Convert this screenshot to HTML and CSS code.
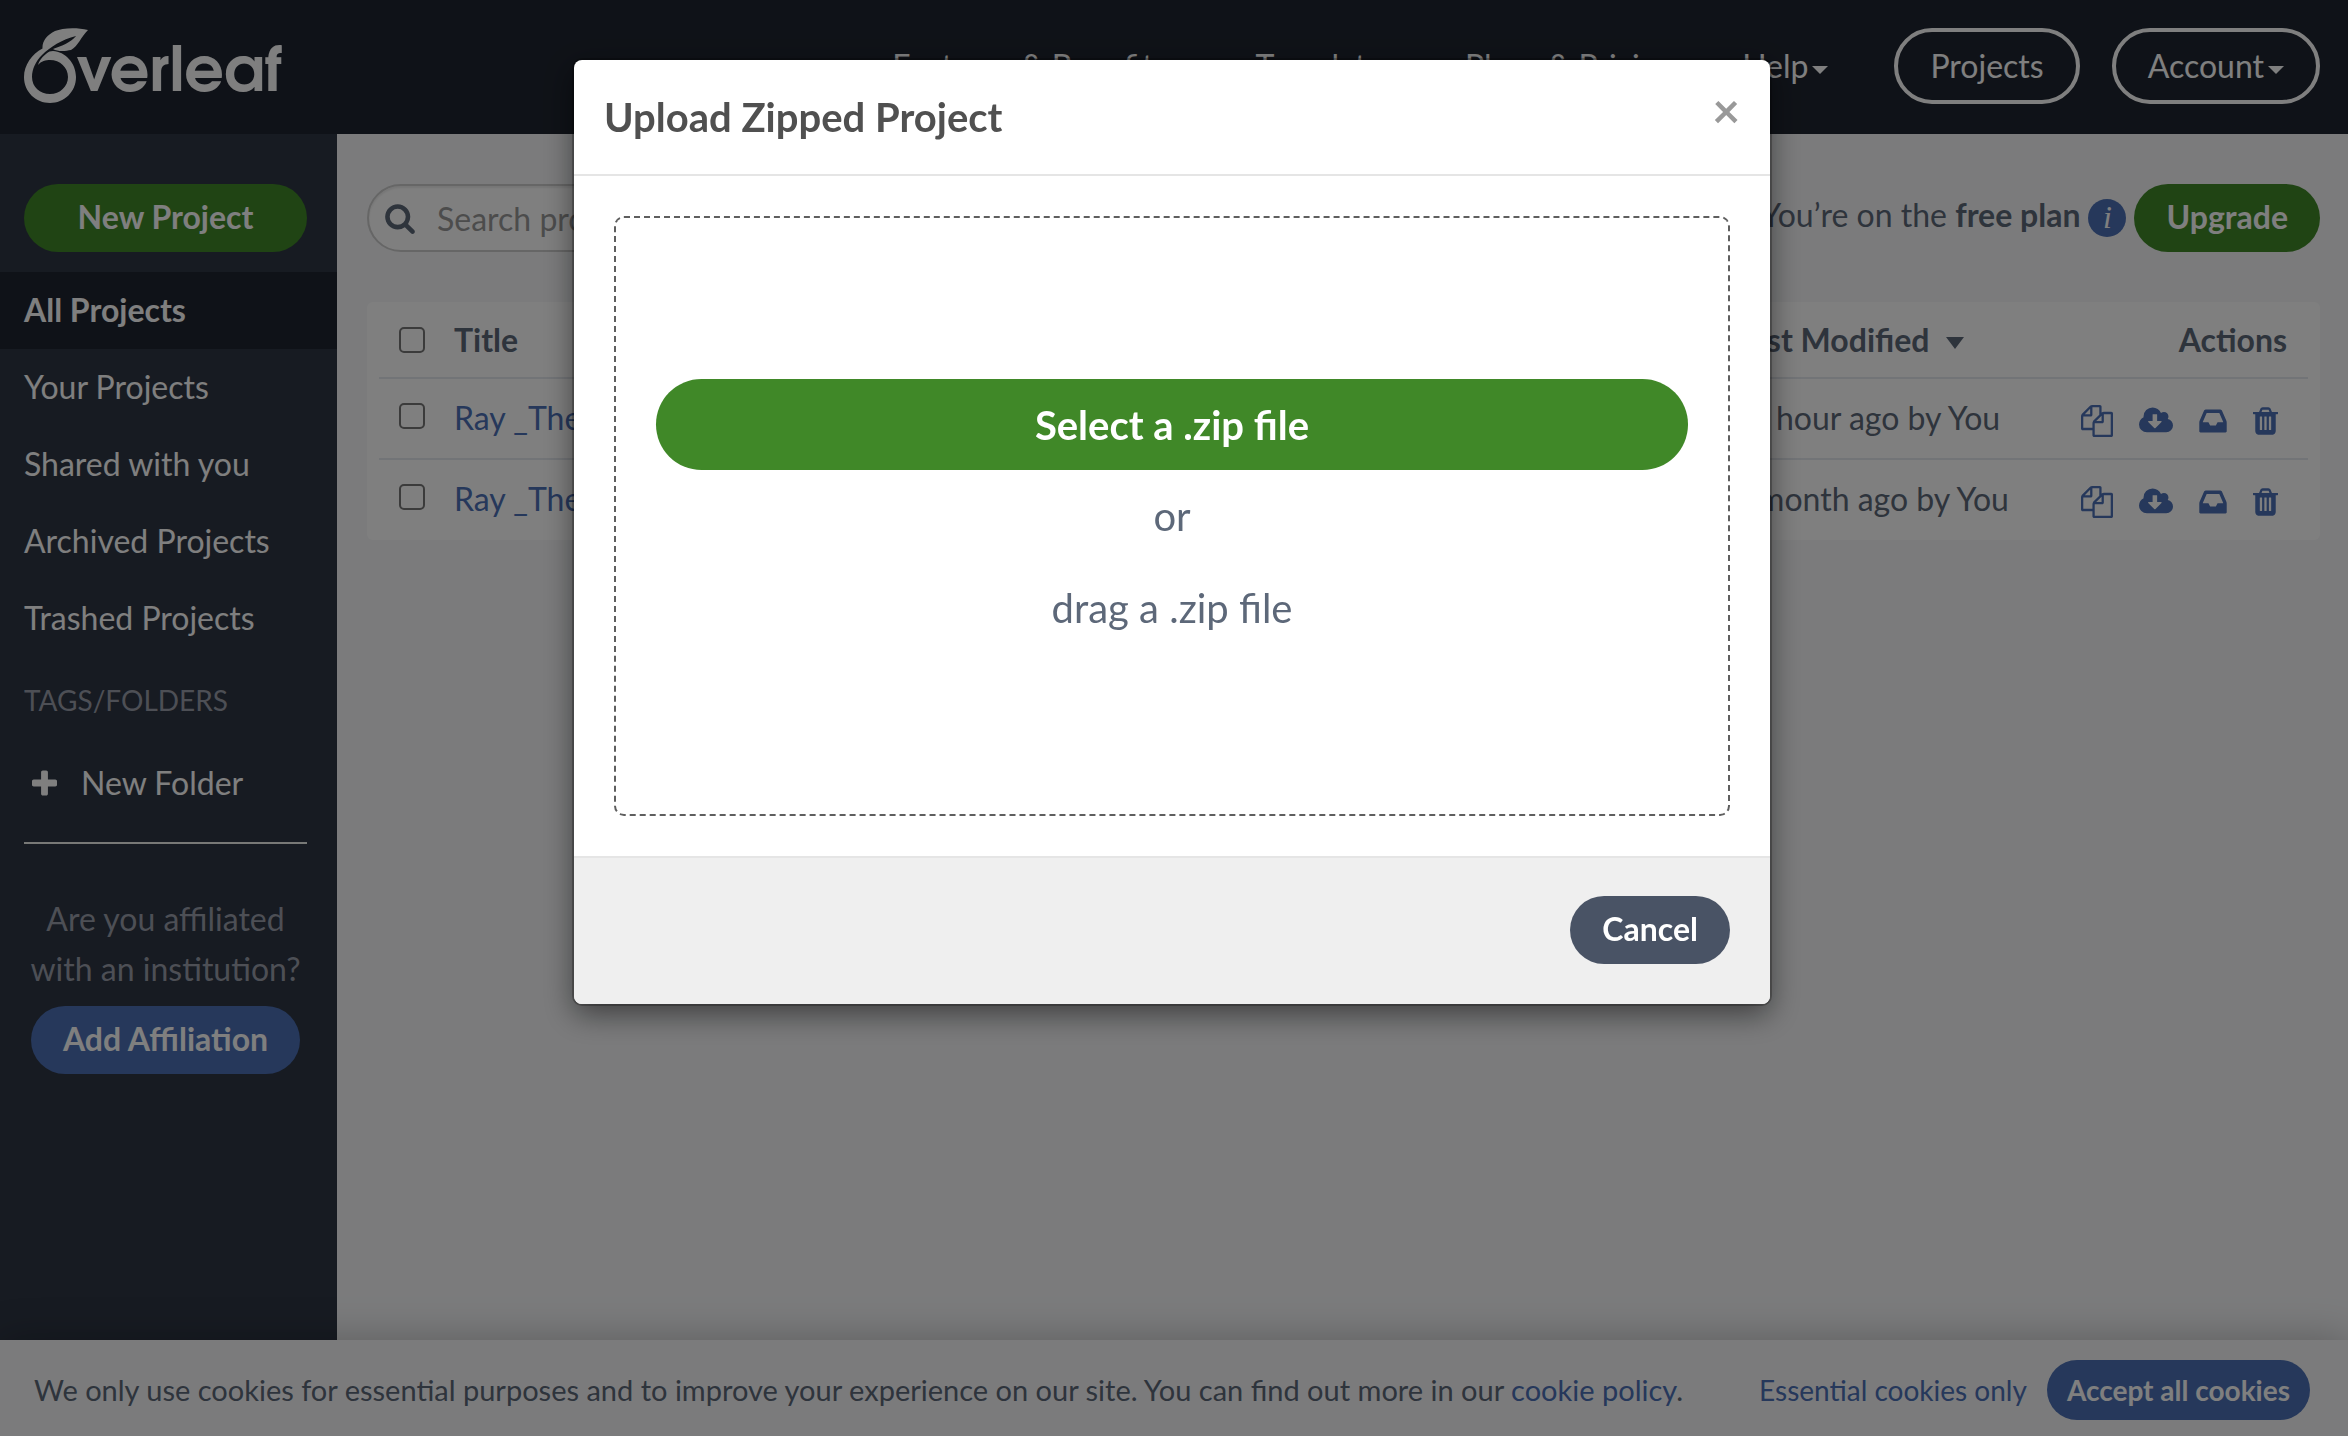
FILE: index.html
```html
<!DOCTYPE html>
<html lang="en">
<head>
<meta charset="utf-8">
<title>Your Projects - Overleaf</title>
<link rel="stylesheet" href="styles.css">
</head>
<body>
<svg class="sprite" aria-hidden="true">
  <symbol id="copy" viewBox="0 0 1792 1792"><path d="M1696 384q40 0 68 28t28 68v1216q0 40-28 68t-68 28h-960q-40 0-68-28t-28-68v-288h-544q-40 0-68-28t-28-68v-672q0-40 20-88t48-76l408-408q28-28 76-48t88-20h416q40 0 68 28t28 68v328q68-40 128-40h416zm-544 213l-299 299h299v-299zm-640-384l-299 299h299v-299zm196 647l316-316v-416h-384v416q0 40-28 68t-68 28h-416v640h512v-256q0-40 20-88t48-76zm956 804v-1152h-384v416q0 40-28 68t-68 28h-416v640h896z"/></symbol>
  <symbol id="download" viewBox="0 0 1920 1792"><path d="M1280 928q0-14-9-23t-23-9h-224v-352q0-13-9.500-22.500t-22.500-9.500h-192q-13 0-22.500 9.500t-9.500 22.500v352h-224q-13 0-22.500 9.500t-9.500 22.500q0 14 9 23l352 352q9 9 23 9t23-9l351-351q10-12 10-24zm640 224q0 159-112.500 271.500t-271.500 112.500h-1088q-185 0-316.500-131.500t-131.500-316.500q0-130 70-240t188-165q-2-30-2-43 0-212 150-362t362-150q156 0 285.500 87t188.500 231q71-62 166-62 106 0 181 75t75 181q0 76-41 138 130 31 213.500 135.500t83.500 238.500z"/></symbol>
  <symbol id="inbox" viewBox="0 0 1536 1792"><path d="M1023 960h316q-1-3-2.500-8t-2.500-8l-212-496h-708l-212 496q-1 2-2.500 8t-2.500 8h316l95 192h320zm513 30v482q0 26-19 45t-45 19h-1408q-26 0-45-19t-19-45v-482q0-62 25-123l238-552q10-25 36.500-42t52.500-17h832q26 0 52.500 17t36.500 42l238 552q25 61 25 123z"/></symbol>
  <symbol id="trash" viewBox="0 0 1408 1792"><path d="M512 1376v-704q0-14-9-23t-23-9h-64q-14 0-23 9t-9 23v704q0 14 9 23t23 9h64q14 0 23-9t9-23zm256 0v-704q0-14-9-23t-23-9h-64q-14 0-23 9t-9 23v704q0 14 9 23t23 9h64q14 0 23-9t9-23zm256 0v-704q0-14-9-23t-23-9h-64q-14 0-23 9t-9 23v704q0 14 9 23t23 9h64q14 0 23-9t9-23zm-544-992h448l-48-117q-7-9-17-11h-317q-10 2-17 11zm928 32v64q0 14-9 23t-23 9h-96v948q0 83-47 143.500t-113 60.500h-832q-66 0-113-58.500t-47-141.500v-952h-96q-14 0-23-9t-9-23v-64q0-14 9-23t23-9h309l70-167q15-37 54-63t79-26h320q40 0 79 26t54 63l70 167h309q14 0 23 9t9 23z"/></symbol>
  <symbol id="search" viewBox="0 0 1664 1792"><path d="M1152 832q0-185-131.500-316.500t-316.500-131.500-316.500 131.500-131.500 316.500 131.500 316.500 316.500 131.500 316.500-131.500 131.500-316.500zm512 832q0 52-38 90t-90 38q-54 0-90-38l-343-342q-179 124-399 124-143 0-273.500-55.500t-225-150-150-225-55.500-273.500 55.500-273.500 150-225 225-150 273.500-55.500 273.500 55.500 225 150 150 225 55.500 273.500q0 220-124 399l343 343q37 37 37 90z"/></symbol>
  <symbol id="plus" viewBox="0 0 1408 1792"><path d="M1408 800v192q0 40-28 68t-68 28h-416v416q0 40-28 68t-68 28h-192q-40 0-68-28t-28-68v-416h-416q-40 0-68-28t-28-68v-192q0-40 28-68t68-28h416v-416q0-40 28-68t68-28h192q40 0 68 28t28 68v416h416q40 0 68 28t28 68z"/></symbol>
</svg>

<div class="page">
  <header class="navbar">
    <a class="brand" href="#" aria-label="Overleaf">
      <svg class="leaf" viewBox="0 0 65 76" aria-hidden="true">
        <path d="M64 2C52-1 38 0 31 3C23 7 18 13 18.500 20.500C8 26 0 37 0 49C0 64 12 75 26 75S52 64 52 49C52 35 41 23.500 29 23Q27 23 25.500 23.500C20 27 16 31 14 37C17 33 22 32 26 32C36 32 44 39.500 44 49S36 66 26 66S8 59 8 49C8 41 12 33 18 27C26 19 38 11.500 52 8C47 14 38 18 29 21C34 24 42 23 47 22C54 18 57 9 64 2Z"/>
      </svg>
      <span class="wordmark">verleaf</span>
    </a>
    <nav class="menu">
      <a href="#">Features &amp; Benefits<span class="caret"></span></a>
      <a href="#">Templates</a>
      <a href="#">Plans &amp; Pricing</a>
      <a href="#">Help<span class="caret"></span></a>
      <a class="outlined" href="#">Projects</a>
      <a class="outlined" href="#">Account<span class="caret"></span></a>
    </nav>
  </header>

  <div class="workspace">
    <aside class="sidebar">
      <button class="btn green new-project" type="button">New Project</button>
      <nav class="filters">
        <a class="active" href="#">All Projects</a>
        <a href="#">Your Projects</a>
        <a href="#">Shared with you</a>
        <a href="#">Archived Projects</a>
        <a href="#">Trashed Projects</a>
      </nav>
      <h2 class="tags-title">TAGS/FOLDERS</h2>
      <button class="new-folder" type="button"><svg class="plus"><use href="#plus"/></svg>New Folder</button>
      <hr class="rule">
      <div class="affiliation">
        <p>Are you affiliated with an institution?</p>
        <button class="btn blue" type="button">Add Affiliation</button>
      </div>
    </aside>

    <main class="content">
      <div class="toolbar">
        <div class="search">
          <svg class="search-icon"><use href="#search"/></svg>
          <input type="search" aria-label="Search projects" placeholder="Search projects…">
        </div>
        <div class="plan">
          <p>You’re on the <b>free plan</b></p>
          <span class="info">i</span>
          <button class="btn green" type="button">Upgrade</button>
        </div>
      </div>
      <div class="card">
        <table class="projects">
          <thead>
            <tr><th class="pick"><input type="checkbox" aria-label="Select all projects"></th><th>Title</th><th class="date">Last Modified<span class="caret sort"></span></th><th class="actions-head">Actions</th></tr>
          </thead>
          <tbody>
            <tr><td class="pick"><input type="checkbox" aria-label="Select project 1"></td><td><a href="#">Ray _Thesis</a></td><td class="date">an hour ago by You</td>
              <td><div class="actions"><button type="button" aria-label="Copy"><svg class="i-copy"><use href="#copy"/></svg></button><button type="button" aria-label="Download"><svg class="i-download"><use href="#download"/></svg></button><button type="button" aria-label="Archive"><svg class="i-inbox"><use href="#inbox"/></svg></button><button type="button" aria-label="Trash"><svg class="i-trash"><use href="#trash"/></svg></button></div></td></tr>
            <tr><td class="pick"><input type="checkbox" aria-label="Select project 2"></td><td><a href="#">Ray _Thesis</a></td><td class="date">a month ago by You</td>
              <td><div class="actions"><button type="button" aria-label="Copy"><svg class="i-copy"><use href="#copy"/></svg></button><button type="button" aria-label="Download"><svg class="i-download"><use href="#download"/></svg></button><button type="button" aria-label="Archive"><svg class="i-inbox"><use href="#inbox"/></svg></button><button type="button" aria-label="Trash"><svg class="i-trash"><use href="#trash"/></svg></button></div></td></tr>
          </tbody>
        </table>
      </div>
    </main>
  </div>

  <section class="cookies" aria-label="Cookies">
    <p>We only use cookies for essential purposes and to improve your experience on our site. You can find out more in our <a href="#">cookie policy</a>.</p>
    <button class="link" type="button">Essential cookies only</button>
    <button class="btn blue compact" type="button">Accept all cookies</button>
  </section>
</div>

<div class="backdrop">
  <div class="modal" role="dialog" aria-modal="true" aria-labelledby="modal-title">
    <header class="modal-head">
      <h3 id="modal-title">Upload Zipped Project</h3>
      <button class="close" type="button" aria-label="Close">×</button>
    </header>
    <div class="modal-body">
      <div class="dropzone">
        <button class="btn green large" type="button">Select a .zip file</button>
        <p>or</p>
        <p>drag a .zip file</p>
      </div>
    </div>
    <footer class="modal-foot">
      <button class="btn slate" type="button">Cancel</button>
    </footer>
  </div>
</div>
</body>
</html>
```

FILE: styles.css
```css
* { box-sizing: border-box; }

body {
  margin: 0;
  font-family: Lato, "Liberation Sans", sans-serif;
  font-size: 32px;
  line-height: 50px;
  color: #5d6879;
}

p, h2, h3 { margin: 0; }
a { color: #4c70b6; text-decoration: none; }
button { font: inherit; color: inherit; border: 0; padding: 0; background: none; }
svg { display: block; fill: currentColor; }
.sprite { display: none; }

.page {
  display: flex;
  flex-direction: column;
  height: 100vh;
  overflow: hidden;
  background: #f6f7f9;
}

.btn {
  flex: none;
  height: 68px;
  padding: 0 32px 2px;
  border-radius: 34px;
  color: #fff;
  font-weight: 700;
}
.green { background: #408828; }
.blue { background: #4c70b6; }
.slate { background: #495365; }

.caret {
  display: inline-block;
  margin-left: 4px;
  border: 8px solid transparent;
  border-top-color: currentColor;
  border-bottom: 0;
  vertical-align: middle;
}

/* Top bar */
.navbar {
  flex: none;
  display: flex;
  justify-content: space-between;
  align-items: center;
  height: 134px;
  padding: 0 28px 2px 24px;
  background: #1f2530;
}
.brand { display: flex; align-items: flex-start; color: #fff; }
.leaf { width: 65px; height: 76px; }
.wordmark {
  margin-left: -12px;
  padding-top: 16px;
  font: 700 62px/60px "TeX Gyre Adventor", Lato, sans-serif;
}
.menu { display: flex; align-items: center; }
.menu a { color: #fff; padding: 0 34px; }
.menu .outlined {
  height: 76px;
  margin-left: 32px;
  padding: 0 32px;
  border: 4px solid #fff;
  border-radius: 38px;
  line-height: 68px;
}

/* Sidebar */
.workspace { flex: 1; display: flex; min-height: 0; }
.sidebar {
  flex: none;
  display: flex;
  flex-direction: column;
  width: 337px;
  padding-top: 50px;
  background: #2e3644;
  color: #fff;
}
.new-project { margin: 0 30px 20px 24px; }
.filters { display: flex; flex-direction: column; }
.filters a { padding: 13px 24px 14px; color: #fff; }
.filters .active { background: #1f2530; font-weight: 700; }
.tags-title {
  padding: 15px 24px 30px;
  color: #9a9fab;
  font-size: 28px;
  font-weight: 400;
  line-height: 56px;
}
.new-folder {
  display: flex;
  align-items: center;
  gap: 24px;
  padding: 0 32px;
}
.plus { width: 25px; height: 32px; }
.rule { width: 283px; margin: 34px 24px 50px; border: 0; border-top: 2px solid #f0f3ee; }
.affiliation { padding: 0 30px 0 24px; color: #9a9fab; text-align: center; }
.affiliation p { margin-bottom: 12px; }

/* Project list */
.content { flex: 1; padding: 50px 28px 0 30px; }
.toolbar { display: flex; justify-content: space-between; margin-bottom: 50px; }
.search {
  display: flex;
  align-items: center;
  gap: 22px;
  width: 1000px;
  height: 68px;
  padding: 0 16px;
  border: 2px solid #ccc;
  border-radius: 34px;
  background: #fff;
  box-shadow: inset 0 2px 2px rgba(0, 0, 0, .08);
}
.search-icon { width: 30px; height: 32px; }
.search input { flex: 1; border: 0; padding: 2px 0 0; background: none; font: inherit; }
.search input::placeholder { color: #999; opacity: 1; }
.plan { display: flex; align-items: center; gap: 8px; }
.plan p { padding-bottom: 6px; }
.info {
  width: 38px;
  height: 38px;
  border-radius: 50%;
  background: #4c70b6;
  color: #fff;
  font: italic 32px/36px "Liberation Serif", serif;
  text-align: center;
}
.card { padding: 0 12px; border-radius: 6px; background: #fff; }
.projects { width: 100%; border-collapse: collapse; table-layout: fixed; }
.projects th, .projects td { height: 81px; padding: 0 0 2px; text-align: left; }
.projects thead th { height: 76px; padding: 0; }
.projects tbody tr { border-top: 2px solid #e4e8ee; }
.projects .pick { width: 75px; padding-left: 20px; }
.projects td.pick { padding-bottom: 6px; }
.pick input {
  display: block;
  appearance: none;
  width: 26px;
  height: 26px;
  margin: 0;
  border: 2px solid #767676;
  border-radius: 5px;
}
.projects .date { width: 414px; }
.sort { margin-left: 16px; border-width: 12px 9px 0; }
.projects .actions-head { width: 160px; padding-right: 21px; text-align: right; }
.actions {
  display: flex;
  justify-content: flex-end;
  align-items: center;
  gap: 26px;
  padding: 6px 30px 0 0;
  color: #4c70b6;
}
.i-copy { width: 32px; height: 32px; }
.i-download { width: 34px; height: 32px; }
.i-inbox { width: 28px; height: 32px; }
.i-trash { width: 25px; height: 32px; }

/* Cookie notice */
.cookies {
  flex: none;
  display: flex;
  align-items: center;
  position: relative;
  height: 96px;
  padding: 4px 38px 0 34px;
  background: #f6f7f9;
  box-shadow: 0 0 40px rgba(0, 0, 0, .25);
  font-size: 28px;
}
.cookies p { flex: 1; font-size: 29px; }
.link { margin-right: 20px; color: #4c70b6; }
.compact { height: 60px; padding: 0 20px; }

/* Dialog */
.backdrop {
  position: fixed;
  inset: 0;
  padding: 60px 4px 0 0;
  background: rgba(0, 0, 0, .5);
}
.modal {
  width: 1196px;
  margin: 0 auto;
  border-radius: 8px;
  overflow: hidden;
  background: #fff;
  box-shadow: 0 0 0 2px rgba(0, 0, 0, .25), 0 10px 30px rgba(0, 0, 0, .5);
}
.modal-head {
  display: flex;
  justify-content: space-between;
  align-items: flex-start;
  padding: 30px;
  border-bottom: 2px solid #e5e5e5;
}
.modal-head h3 { color: #505050; font-size: 40px; line-height: 54px; }
.close { color: #999; font-size: 48px; font-weight: 700; line-height: 40px; }
.modal-body { padding: 40px; }
.dropzone {
  display: flex;
  flex-direction: column;
  justify-content: center;
  height: 600px;
  padding: 0 40px;
  border: 2px dashed #5e5e5e;
  border-radius: 10px;
  font-size: 40px;
  line-height: 92px;
  text-align: center;
}
.large { height: 91px; border-radius: 46px; }
.modal-foot {
  display: flex;
  justify-content: flex-end;
  padding: 38px 40px 40px;
  border-top: 2px solid #e5e5e5;
  background: #efefef;
}
```
